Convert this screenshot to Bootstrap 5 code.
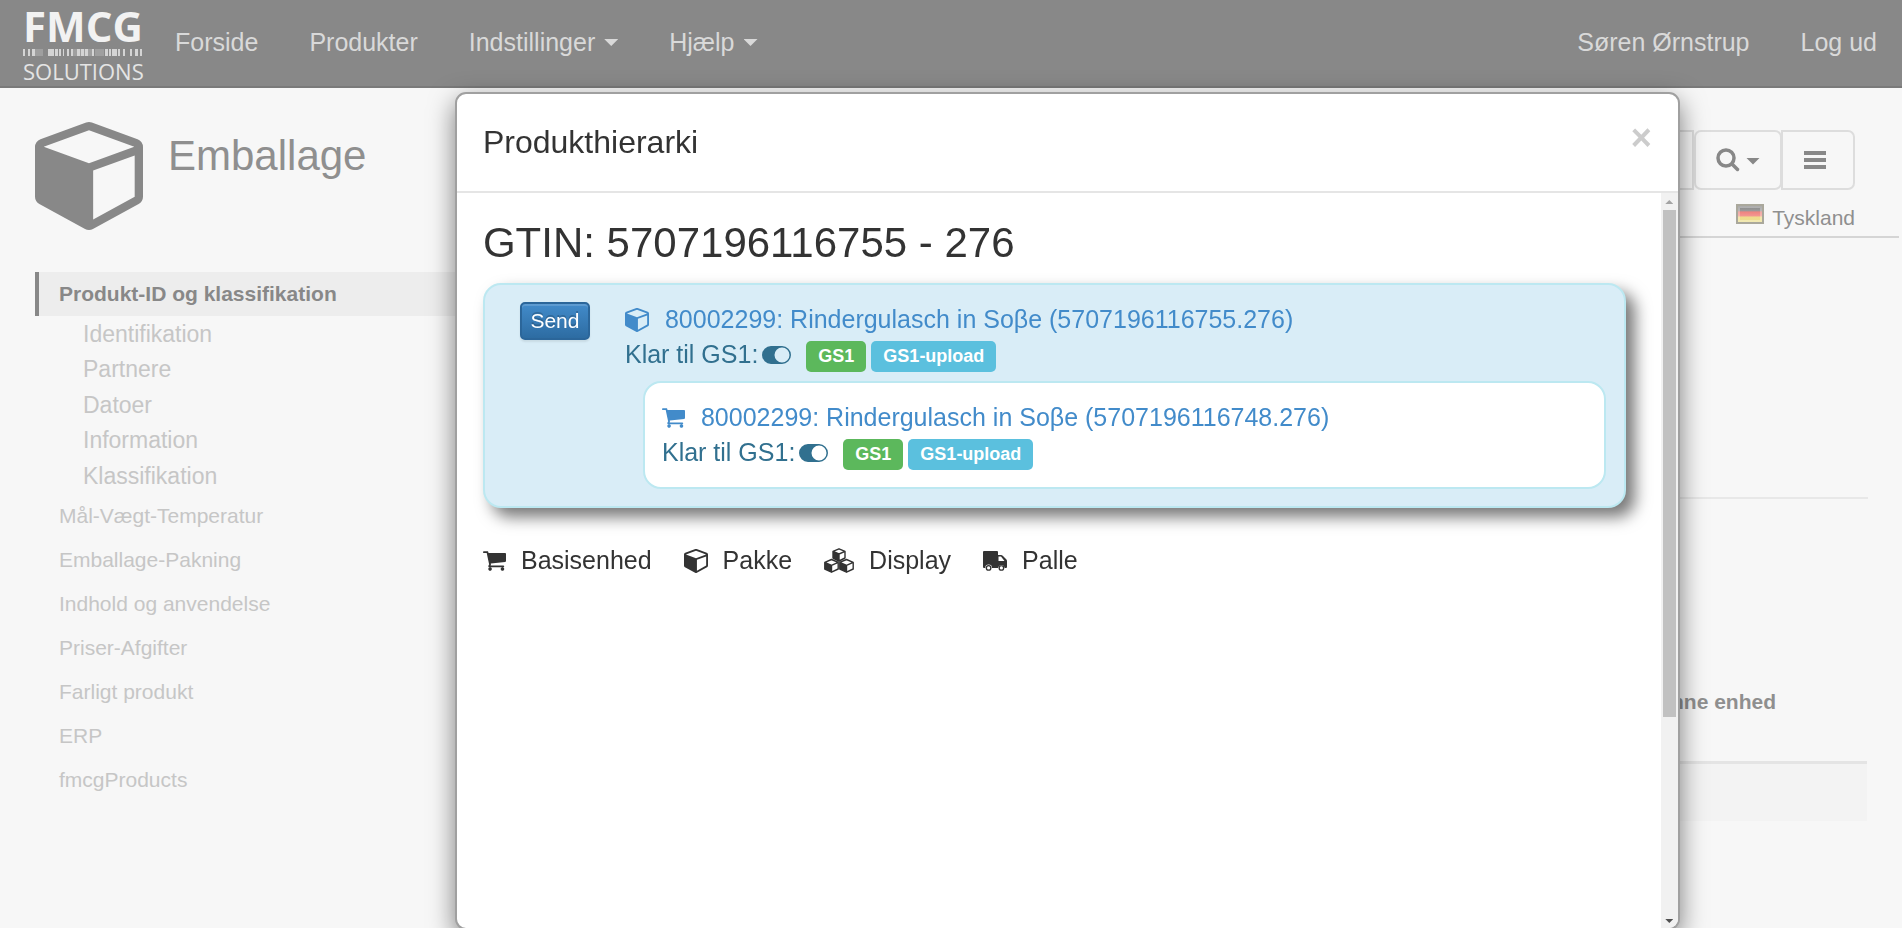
<!DOCTYPE html>
<html lang="da">
<head>
<meta charset="utf-8">
<meta name="viewport" content="width=device-width, initial-scale=1">
<title>Produkthierarki - FMCG Solutions</title>
<link href="https://cdn.jsdelivr.net/npm/bootstrap@5.3.0/dist/css/bootstrap.min.css" rel="stylesheet">
<style>
body { font-family: "Liberation Sans", Arial, sans-serif; font-size: 25px; line-height: 35px; color: #333; background: #f7f7f7; overflow: hidden; }
a { text-decoration: none; }
svg { display: block; flex: none; }

.topbar { background: #888; border-bottom: 2px solid #7a7a7a; height: 88px; padding: 0; align-items: stretch; }
.topbar .navbar-nav { flex-direction: row; align-items: flex-start; }
.topbar .nav-link { color: #d9d9d9; padding: 25px 25px 24px 26px; display: flex; align-items: center; }
.arrow { width: 14px; height: 7px; background: currentColor; clip-path: polygon(0 0, 100% 0, 50% 100%); margin-left: 9px; }
.logo { font-family: "Open Sans", "Noto Sans", sans-serif; color: #f2f2f2; width: 149px; padding: 3px 0 0 23px; }
.logo:hover { color: #f2f2f2; }
.logo-top { font-size: 42px; line-height: 46px; font-weight: 700; }
.logo-bottom { font-size: 22px; line-height: 30px; color: #e4e4e4; }

.sidebar { width: 24%; flex: none; padding: 34px 0 0 35px; }
.page-cube { color: #888; }
.page-title { font-size: 42px; line-height: 46px; color: #8f8f8f; font-weight: 400; margin: 11px 0 0 25px; }
.side-menu { margin-top: 42px; font-size: 21px; line-height: 44px; }
.side-menu a { display: block; color: #c6c6c6; padding-left: 24px; }
.side-menu > li > a.active { border-left: 4px solid #888; background: #ededed; color: #888; font-weight: 700; padding-left: 20px; }
.side-sub { display: grid; grid-template-rows: repeat(5, 1fr); height: 178px; padding-top: 1px; font-size: 23px; line-height: 35px; }
.side-menu .side-sub a { padding-left: 48px; }

.main-col { padding: 42px 3px 0 0; color: #8f8f8f; }
.tool { border: 2px solid #ddd; border-radius: 7px; height: 60px; color: #888; padding: 0 20px; display: flex; align-items: center; justify-content: center; }
.tool-menu { width: 74px; border-radius: 0 7px 7px 0; padding: 0 7px 0 0; margin-left: -1px; }
.tool .arrow { margin: 2px 0 0 6px; }
.country { font-size: 21px; line-height: 28px; padding: 14px 44px 4px 0; border-bottom: 2px solid #d5d5d5; }
.toolbar { padding-right: 44px; }
.divider { border-bottom: 2px solid #e8e8e8; margin: 259px 31px 0 0; }
.unit-wrap { padding: 188px 32px 0 0; }
.unit-table { font-size: 21px; line-height: 30px; }
.unit-table th { text-align: right; padding: 0 91px 44px 0; border-bottom: 3px solid #e4e4e4; }
.unit-table td { height: 58px; background: #f3f3f3; }

.hier-dialog { width: 64.4%; max-width: none; height: calc(100vh - 90px); margin: 92px 0 0 23.92%; }
.hier-dialog .modal-content { height: 100%; border: 2px solid #a0a0a0; border-radius: 11px; box-shadow: 0 9px 26px rgba(0,0,0,.5); overflow: hidden; color: #333; }
.hier-dialog .modal-header { padding: 26px; border-bottom: 2px solid #e5e5e5; border-radius: 0; align-items: flex-start; }
.hier-dialog .modal-title { font-size: 32px; line-height: 45px; font-weight: 400; }
.x-close { border: 0; background: none; padding: 0; color: #ccc; font-size: 36px; line-height: 35px; font-weight: 700; }
.hier-body { padding: 27px 35px 0 26px; }
.gtin { font-size: 42px; line-height: 46px; margin-bottom: 17px; font-weight: 400; }
.hier-panel { border: 2px solid #bce8f1; border-radius: 18px; background: #d9edf7; padding: 17px 18px 17px 35px; box-shadow: 9px 9px 16px #777; color: #31708f; }
.hier-inner { border: 2px solid #bce8f1; border-radius: 18px; background: #fff; padding: 17px; margin: 9px 0 0 18px; }
.send { font-size: 21px; line-height: 32px; width: 70px; height: 38px; padding: 1px 0; color: #fff; border: 2px solid #2b669a; border-radius: 5px; background: linear-gradient(#428bca, #2d6ca2); text-shadow: 0 -2px 0 rgba(0,0,0,.2); box-shadow: inset 0 2px 0 rgba(255,255,255,.15), 0 2px 2px rgba(0,0,0,.08); margin-right: 35px; flex: none; }
.prod { color: #428bca; display: flex; align-items: center; }
.prod svg { margin-right: 16px; }
.tag { font-size: 18px; line-height: 31px; font-weight: 700; color: #fff; border-radius: 5px; padding: 0 12px; margin-right: 5px; height: 31px; margin-top: 4px; }
.tag-ok { background: #5cb85c; }
.tag-up { background: #5bc0de; }
.switch-on { margin: 0 15px 0 4px; }
.legend-row { margin-top: 35px; display: flex; }
.legend-row span { display: flex; align-items: center; gap: 15px; margin-right: 32px; }

.scroller { width: 17px; flex: none; background: #f1f1f1; display: flex; flex-direction: column; align-items: center; }
.scroll-thumb { width: 13px; height: 69%; background: #c1c1c1; }
.scroll-up { width: 8px; height: 4px; margin: 7px 0 6px; background: #a3a3a3; clip-path: polygon(50% 0, 100% 100%, 0 100%); }
.scroll-down { width: 8px; height: 4px; margin: auto 0 5px; background: #505050; clip-path: polygon(0 0, 100% 0, 50% 100%); }
</style>
</head>
<body>
<svg width="0" height="0" class="position-absolute" aria-hidden="true">
  <symbol id="cube" viewBox="0 128 1664 1664"><path fill="currentColor" d="M896 1629l640-349v-636l-640 233v752zm-64-865l698-254-698-254-698 254zm832-252v768q0 35-18 65t-49 47l-704 384q-28 16-61 16t-61-16l-704-384q-31-17-49-47t-18-65v-768q0-40 23-73t61-47l704-256q22-8 44-8t44 8l704 256q38 14 61 47t23 73z"/></symbol>
  <symbol id="cart" viewBox="0 256 1664 1408"><path fill="currentColor" d="M640 1536q0 52-38 90t-90 38-90-38-38-90 38-90 90-38 90 38 38 90zm896 0q0 52-38 90t-90 38-90-38-38-90 38-90 90-38 90 38 38 90zm128-1088v512q0 24-16.5 42.5t-40.5 21.5l-1044 122q13 60 13 70 0 16-24 64h920q26 0 45 19t19 45-19 45-45 19h-1024q-26 0-45-19t-19-45q0-11 8-31.500t16-36 21.500-40 15.500-29.500l-177-823h-204q-26 0-45-19t-19-45 19-45 45-19h256q16 0 28.500 6.500t19.500 15.500 13 24.500 8 26 5.500 29.500 4.500 26h1201q26 0 45 19t19 45z"/></symbol>
  <symbol id="toggle" viewBox="0 0 29 18"><path fill="currentColor" fill-rule="evenodd" d="M9 0h11a9 9 0 0 1 0 18H9A9 9 0 0 1 9 0zm11 1.500a7.500 7.500 0 0 0 0 15 7.500 7.500 0 0 0 0-15z"/></symbol>
  <symbol id="cubes" viewBox="0 0 30 25">
    <g fill="none" stroke="currentColor" stroke-width="1.400" stroke-linejoin="round">
      <path d="M15 .8l6 2.500v6.700l-6 3-6-3V3.300zM9 3.300l6 2.700 6-2.700M15 6v7M7.500 11.500l6.700 2.900v6.600l-6.700 3.200L.8 21v-6.600zM.8 14.400l6.700 2.900 6.700-2.900M7.500 17.300v6.900M22.500 11.500l6.700 2.900v6.600l-6.700 3.200-6.700-3.200v-6.600zM15.800 14.400l6.700 2.900 6.700-2.900M22.500 17.300v6.900"/>
    </g>
    <path fill="currentColor" d="M9 3.300L15 6v7l-6-3zM.8 14.400l6.700 2.900v6.900L.8 21zM15.800 14.400l6.700 2.900v6.900l-6.700-3.200z"/>
  </symbol>
  <symbol id="truck" viewBox="0 0 24 20"><path fill="currentColor" fill-rule="evenodd" d="M1 0h13a1 1 0 0 1 1 1v3h3q1 0 2 1l3 3q1 1 1 2v6q0 1-1 1h-1.300a3.400 3.400 0 0 0-6.700 0H9a3.400 3.400 0 0 0-6.800 0H1q-1 0-1-1V1q0-1 1-1zm14.500 5.500V10h6L18 5.500zM5.600 14a2.900 2.900 0 1 1 0 5.800 2.900 2.900 0 0 1 0-5.800zm0 1.300a1.600 1.600 0 1 0 0 3.200 1.600 1.600 0 0 0 0-3.200zM18.400 14a2.900 2.900 0 1 1 0 5.800 2.900 2.900 0 0 1 0-5.800zm0 1.300a1.600 1.600 0 1 0 0 3.200 1.600 1.600 0 0 0 0-3.200z"/></symbol>
</svg>

<nav class="navbar topbar d-flex flex-nowrap">
  <a class="logo" href="#" aria-label="FMCG Solutions">
    <div class="logo-top">FMCG</div>
    <svg width="119" height="7" viewBox="0 0 119 7" fill="#d4d4d4"><path d="M0 0h2v7H0zM5 0h2v7H5zM9 0h3v7H9zM25 0h6v7h-6zM32 0h3v7h-3zM36 0h2v7h-2zM40 0h1v7h-1zM44 0h2v7h-2zM48 0h2v7h-2zM54 0h3v7h-3zM58 0h3v7h-3zM62 0h3v7h-3zM69 0h2v7h-2zM82 0h3v7h-3zM86 0h2v7h-2zM89 0h5v7h-5zM95 0h2v7h-2zM100 0h2v7h-2zM107 0h2v7h-2zM112 0h3v7h-3zM117 0h2v7h-2z"/><path opacity=".3" d="M12 0h8v7h-8zM72 0h9v7h-9zM50 0h19v7H50z"/></svg>
    <div class="logo-bottom">SOLUTIONS</div>
  </a>
  <ul class="navbar-nav">
    <li><a class="nav-link" href="#">Forside</a></li>
    <li><a class="nav-link" href="#">Produkter</a></li>
    <li><a class="nav-link" href="#">Indstillinger<i class="arrow"></i></a></li>
    <li><a class="nav-link" href="#">Hjælp<i class="arrow"></i></a></li>
  </ul>
  <ul class="navbar-nav ms-auto">
    <li><a class="nav-link" href="#">Søren Ørnstrup</a></li>
    <li><a class="nav-link" href="#">Log ud</a></li>
  </ul>
</nav>

<div class="d-flex">
  <aside class="sidebar">
    <div class="d-flex">
      <svg class="page-cube" width="108" height="108"><use href="#cube"/></svg>
      <h1 class="page-title">Emballage</h1>
    </div>
    <ul class="side-menu list-unstyled mb-0">
      <li><a class="active" href="#">Produkt-ID og klassifikation</a>
        <ul class="side-sub list-unstyled">
          <li><a href="#">Identifikation</a></li>
          <li><a href="#">Partnere</a></li>
          <li><a href="#">Datoer</a></li>
          <li><a href="#">Information</a></li>
          <li><a href="#">Klassifikation</a></li>
        </ul>
      </li>
      <li><a href="#">Mål-Vægt-Temperatur</a></li>
      <li><a href="#">Emballage-Pakning</a></li>
      <li><a href="#">Indhold og anvendelse</a></li>
      <li><a href="#">Priser-Afgifter</a></li>
      <li><a href="#">Farligt produkt</a></li>
      <li><a href="#">ERP</a></li>
      <li><a href="#">fmcgProducts</a></li>
    </ul>
  </aside>
  <main class="main-col flex-grow-1">
    <div class="toolbar d-flex justify-content-end">
      <button type="button" class="btn tool rounded-0" aria-label="Vis"></button>
      <button type="button" class="btn tool" aria-label="Søg">
        <svg width="24" height="24" viewBox="0 0 24 24" fill="none" stroke="currentColor" stroke-width="3.500"><circle cx="10" cy="10" r="8"/><path stroke-linecap="round" d="M16 16l5.500 5.500"/></svg><i class="arrow"></i>
      </button>
      <button type="button" class="btn tool tool-menu" aria-label="Menu">
        <svg width="22" height="18" viewBox="0 0 22 18" fill="currentColor"><path d="M0 0h22v4H0zM0 7h22v4H0zM0 14h22v4H0z"/></svg>
      </button>
    </div>
    <div class="country d-flex justify-content-end align-items-start">
      <svg width="28" height="20" viewBox="0 0 28 20" class="me-2"><defs><linearGradient id="de" x2="0" y2="1"><stop offset="0" stop-color="#888"/><stop offset=".28" stop-color="#999"/><stop offset=".38" stop-color="#ee8580"/><stop offset=".6" stop-color="#f29590"/><stop offset=".7" stop-color="#f0dc8c"/><stop offset="1" stop-color="#eadf90"/></linearGradient></defs><path fill="#aaa89c" d="M0 0h28v20H0z"/><path fill="url(#de)" d="M2 2h24v16H2z"/><path fill="none" stroke="#fff" stroke-opacity=".3" stroke-width="2" d="M3 3h22v14H3z"/></svg>Tyskland
    </div>
    <div class="divider"></div>
    <div class="unit-wrap">
      <table class="unit-table w-100">
        <thead><tr><th>denne enhed</th></tr></thead>
        <tbody><tr><td></td></tr></tbody>
      </table>
    </div>
  </main>
</div>

<div class="modal d-block" tabindex="-1" role="dialog" aria-labelledby="hierTitle">
  <div class="modal-dialog hier-dialog">
    <div class="modal-content">
      <div class="modal-header">
        <h4 class="modal-title" id="hierTitle">Produkthierarki</h4>
        <button type="button" class="x-close" aria-label="Luk">×</button>
      </div>
      <div class="d-flex flex-grow-1">
        <div class="hier-body flex-grow-1">
          <h2 class="gtin">GTIN: 5707196116755 - 276</h2>
          <div class="hier-panel d-flex align-items-start">
            <button type="button" class="send">Send</button>
            <div class="flex-grow-1">
              <a class="prod" href="#"><svg width="24" height="24"><use href="#cube"/></svg>80002299: Rindergulasch in Soβe (5707196116755.276)</a>
              <div class="d-flex align-items-center">Klar til GS1:<svg class="switch-on" width="29" height="18"><use href="#toggle"/></svg><span class="tag tag-ok">GS1</span><span class="tag tag-up">GS1-upload</span></div>
              <div class="hier-inner">
                <a class="prod" href="#"><svg width="23" height="20"><use href="#cart"/></svg>80002299: Rindergulasch in Soβe (5707196116748.276)</a>
                <div class="d-flex align-items-center">Klar til GS1:<svg class="switch-on" width="29" height="18"><use href="#toggle"/></svg><span class="tag tag-ok">GS1</span><span class="tag tag-up">GS1-upload</span></div>
              </div>
            </div>
          </div>
          <div class="legend-row">
            <span><svg width="23" height="20"><use href="#cart"/></svg>Basisenhed</span>
            <span><svg width="24" height="24"><use href="#cube"/></svg>Pakke</span>
            <span><svg width="30" height="25"><use href="#cubes"/></svg>Display</span>
            <span><svg width="24" height="20"><use href="#truck"/></svg>Palle</span>
          </div>
        </div>
        <div class="scroller" aria-hidden="true"><i class="scroll-up"></i><i class="scroll-thumb"></i><i class="scroll-down"></i></div>
      </div>
    </div>
  </div>
</div>
<script src="https://cdn.jsdelivr.net/npm/bootstrap@5.3.0/dist/js/bootstrap.bundle.min.js"></script>
</body>
</html>
